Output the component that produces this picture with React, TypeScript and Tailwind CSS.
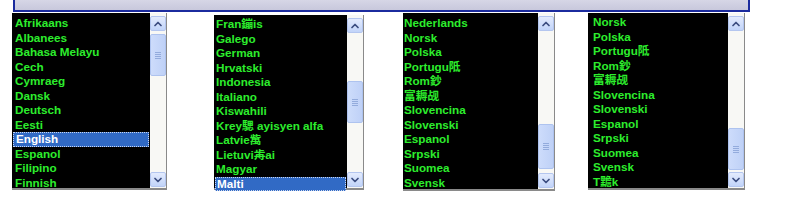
import { ChevronUp, ChevronDown } from 'lucide-react'

type ListBoxProps = {
  items: string[]
  selected?: number
  className: string
  itemPad: string
  listPad: string
  thumbOffset: string
  thumbHeight: string
}

function ScrollButton({ up }: { up?: boolean }) {
  return (
    <div className="flex h-[15px] w-full items-center justify-center rounded-[2px] border border-[#b4c6ef] bg-gradient-to-b from-[#e3ebfd] to-[#c2d4f9]">
      {up ? (
        <ChevronUp className="h-3 w-3 text-[#3b4d80]" strokeWidth={3.5} />
      ) : (
        <ChevronDown className="h-3 w-3 text-[#3b4d80]" strokeWidth={3.5} />
      )}
    </div>
  )
}

function ListBox({ items, selected, className, itemPad, listPad, thumbOffset, thumbHeight }: ListBoxProps) {
  return (
    <div className={`flex border-b-2 border-r border-[#8a8a8a] bg-black ${className}`}>
      <ul className={`flex-1 pl-[1px] pr-[1px] ${listPad}`}>
        {items.map((item, i) => (
          <li
            key={i}
            className={
              i === selected
                ? `h-[14.5px] border border-dotted border-[#c9d6f0] bg-[#316ac5] leading-[12.5px] text-white ${itemPad}`
                : `h-[14.5px] leading-[14.5px] text-[#2ded2d] ${itemPad}`
            }
          >
            {item}
          </li>
        ))}
      </ul>
      <div className="flex w-[16px] flex-col bg-[#f8f8f5] pt-[3px] pb-[1px]">
        <ScrollButton up />
        <div className={`flex-1 ${thumbOffset}`}>
          <div
            className={`flex w-full flex-col items-center justify-center gap-[1px] rounded-[2px] border border-[#aec3ef] bg-gradient-to-r from-[#cddcfb] to-[#bfd1f7] ${thumbHeight}`}
          >
            <div className="h-[1px] w-[6px] bg-[#93abdc]" />
            <div className="h-[1px] w-[6px] bg-[#93abdc]" />
            <div className="h-[1px] w-[6px] bg-[#93abdc]" />
            <div className="h-[1px] w-[6px] bg-[#93abdc]" />
          </div>
        </div>
        <ScrollButton />
      </div>
    </div>
  )
}

const list1 = [
  'Afrikaans',
  'Albanees',
  'Bahasa Melayu',
  'Cech',
  'Cymraeg',
  'Dansk',
  'Deutsch',
  'Eesti',
  'English',
  'Espanol',
  'Filipino',
  'Finnish',
]

const list2 = [
  'Fran鏰is',
  'Galego',
  'German',
  'Hrvatski',
  'Indonesia',
  'Italiano',
  'Kiswahili',
  'Krey騦 ayisyen alfa',
  'Latvie歶',
  'Lietuvi歬ai',
  'Magyar',
  'Malti',
]

const list3 = [
  'Nederlands',
  'Norsk',
  'Polska',
  'Portugu阺',
  'Rom鈔',
  '富耨觇',
  'Slovencina',
  'Slovenski',
  'Espanol',
  'Srpski',
  'Suomea',
  'Svensk',
]

const list4 = [
  'Norsk',
  'Polska',
  'Portugu阺',
  'Rom鈔',
  '富耨觇',
  'Slovencina',
  'Slovenski',
  'Espanol',
  'Srpski',
  'Suomea',
  'Svensk',
  'T黵k',
]

export default function App() {
  return (
    <div
      className="h-[212px] w-[800px] overflow-hidden bg-white text-[11.7px] font-bold"
      style={{ fontFamily: '"Liberation Sans", Arial, "Noto Sans CJK SC", sans-serif' }}
    >
      <div className="ml-[13px] h-[12px] w-[737px] border-b-2 border-l-2 border-r-2 border-[#1b2b9e] bg-gradient-to-b from-[#d6d6e6] to-[#c8c8dc]" />
      <div className="flex items-start pl-[12px]">
        <ListBox
          items={list1}
          selected={8}
          className="mt-[1px] h-[177px] w-[155px]"
          itemPad="pl-[2px]"
          listPad="pt-[3px]"
          thumbOffset="pt-[3px]"
          thumbHeight="h-[42px]"
        />
        <ListBox
          items={list2}
          selected={11}
          className="mt-[3px] ml-[47px] h-[175px] w-[150px]"
          itemPad="pl-[1px]"
          listPad="pt-[2px]"
          thumbOffset="pt-[48px]"
          thumbHeight="h-[42px]"
        />
        <ListBox
          items={list3}
          className="mt-[1px] ml-[39px] h-[178px] w-[152px]"
          itemPad="pl-0"
          listPad="pt-[3px]"
          thumbOffset="pt-[93px]"
          thumbHeight="h-[45px]"
        />
        <ListBox
          items={list4}
          className="mt-[1px] ml-[33px] h-[177px] w-[157px]"
          itemPad="pl-[4px]"
          listPad="pt-[2px]"
          thumbOffset="pt-[97px]"
          thumbHeight="h-[42px]"
        />
      </div>
    </div>
  )
}
